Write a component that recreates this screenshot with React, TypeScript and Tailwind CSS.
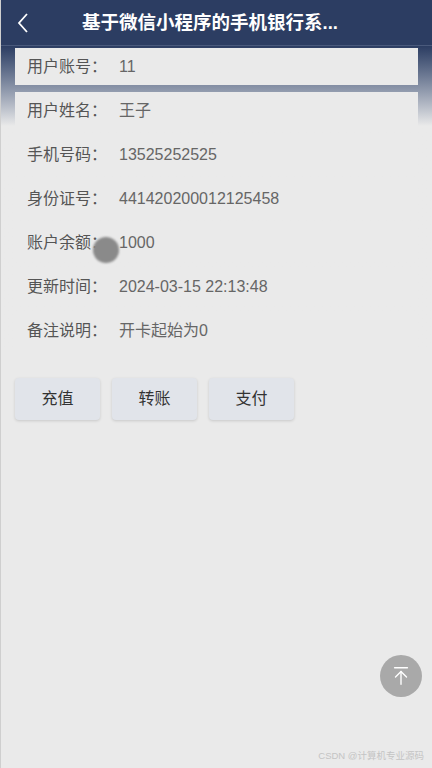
import { ArrowUpToLine } from 'lucide-react';

const rows = [
  { label: '用户账号：', value: '11' },
  { label: '用户姓名：', value: '王子' },
  { label: '手机号码：', value: '13525252525' },
  { label: '身份证号：', value: '441420200012125458' },
  { label: '账户余额：', value: '1000' },
  { label: '更新时间：', value: '2024-03-15 22:13:48' },
  { label: '备注说明：', value: '开卡起始为0' },
];

const actions = ['充值', '转账', '支付'];

export default function App() {
  return (
    <div
      className="relative w-[432px] h-[768px] overflow-hidden bg-[#eaeaea] border-l border-[#cfcfcf]"
      style={{ fontFamily: '"Liberation Sans", Arial, "Noto Sans CJK SC", sans-serif' }}
    >
      {/* header */}
      <div className="h-[46px] bg-[#2c3d62] flex items-center border-b border-[#4a5a7c]">
        <button className="w-[44px] h-full flex items-center justify-center text-white">
          <svg className="w-[16px] h-[24px]" viewBox="0 0 16 24" fill="none" stroke="currentColor" strokeWidth={1.8}>
            <path d="M12 3 L4 12 L12 21" />
          </svg>
        </button>
        <h1 className="flex-1 pl-[37px] text-white text-[18.5px] font-bold truncate">
          基于微信小程序的手机银行系...
        </h1>
      </div>

      {/* detail list */}
      <div className="bg-gradient-to-b from-[#2c3d62] from-[0px] to-[#eaeaea] to-[80px] px-[14px] pt-[2px] flex flex-col gap-[7px]">
        {rows.map((r) => (
          <div key={r.label} className="h-[37px] bg-[#eaeaea] flex items-center px-[12px] text-[16px]">
            <span className="w-[92px] text-[#555]">{r.label}</span>
            <span className="text-[#666]">{r.value}</span>
          </div>
        ))}
      </div>

      {/* actions */}
      <div className="flex gap-[12px] px-[14px] mt-[29px]">
        {actions.map((a) => (
          <button
            key={a}
            className="w-[85px] h-[42px] rounded-[4px] bg-[#e1e4ea] text-[16px] text-[#333] shadow-[0_1px_3px_rgba(0,0,0,0.15)]"
          >
            {a}
          </button>
        ))}
      </div>

      {/* touch indicator */}
      <div className="absolute left-[92px] top-[237px] w-[26px] h-[26px] rounded-full bg-[#8a8a8a] blur-[1px]" />

      {/* back to top */}
      <button className="absolute left-[379px] top-[655px] w-[42px] h-[42px] rounded-full bg-[#a9a9a9] flex items-center justify-center text-white">
        <ArrowUpToLine className="w-[22px] h-[22px]" strokeWidth={1.5} />
      </button>

      <div className="absolute right-[8px] bottom-[5px] text-[9.5px] text-[#c4c4c4]">CSDN @计算机专业源码</div>
    </div>
  );
}
